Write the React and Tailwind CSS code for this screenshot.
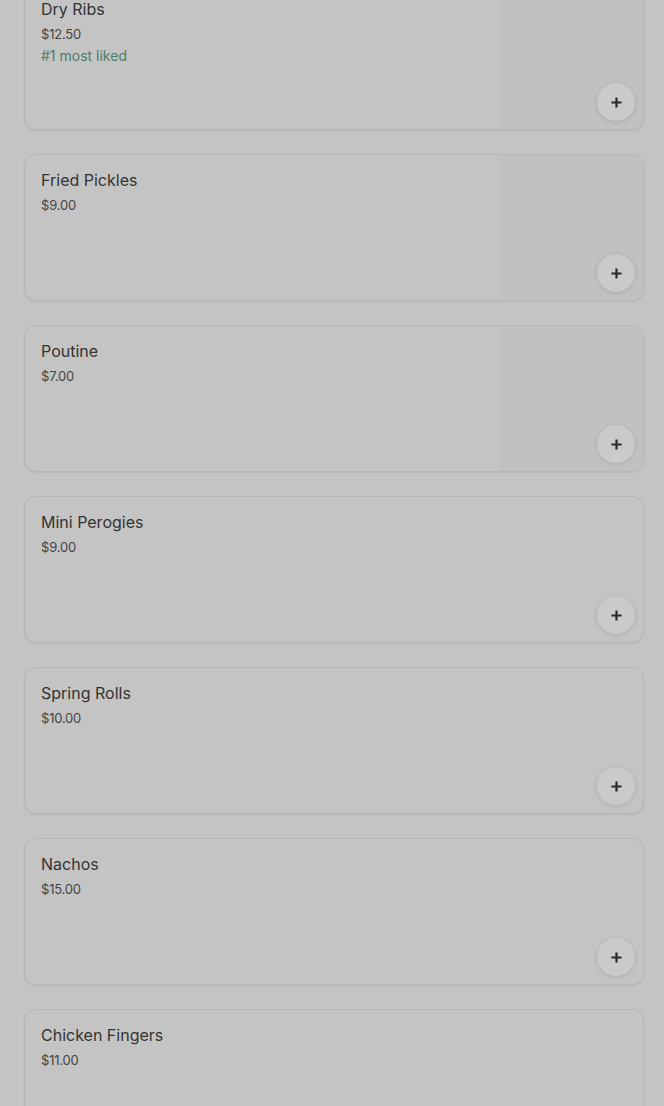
import React from "react";

const items = [
  { name: "Dry Ribs", price: "$12.50", tag: "#1 most liked", img: true },
  { name: "Fried Pickles", price: "$9.00", img: true },
  { name: "Poutine", price: "$7.00", img: true },
  { name: "Mini Perogies", price: "$9.00" },
  { name: "Spring Rolls", price: "$10.00" },
  { name: "Nachos", price: "$15.00" },
  { name: "Chicken Fingers", price: "$11.00" },
];

function Plus() {
  return (
    <svg width="13" height="13" viewBox="0 0 14 14" fill="none">
      <path d="M7 1.5v11M1.5 7h11" stroke="#2b2b2b" strokeWidth="2.4" strokeLinecap="butt" />
    </svg>
  );
}

export default function App() {
  return (
    <div
      className="min-h-[1106px] w-full overflow-hidden bg-[#c4c4c4] pl-6 pr-5"
      style={{ fontFamily: "Inter, Roboto, 'Liberation Sans', sans-serif" }}
    >
      <div className="-mt-[17px] flex flex-col gap-6">
        {items.map((it) => (
          <div
            key={it.name}
            className="relative flex h-[147px] shrink-0 overflow-hidden rounded-xl border border-[#b6b6b6] bg-[#c4c4c4] shadow-[0_1px_2px_rgba(0,0,0,0.06)]"
          >
            <div className="flex flex-1 flex-col px-4 pt-[15px]">
              <div className="text-[16px] leading-5 text-[#333333]">{it.name}</div>
              <div className="mt-[6px] text-[13px] leading-[18px] tracking-[-0.2px] text-[#444444]">{it.price}</div>
              {it.tag && (
                <div className="mt-1 text-[14px] leading-[18px] text-[#4a7f66]">{it.tag}</div>
              )}
            </div>
            {it.img && <div className="w-[143px] shrink-0 bg-[#c1c1c1]" />}
            <button className="absolute bottom-[8px] right-[8px] flex h-[38px] w-[38px] items-center justify-center rounded-full bg-[#cacaca] shadow-[0_1px_5px_rgba(0,0,0,0.12)]">
              <Plus />
            </button>
          </div>
        ))}
      </div>
    </div>
  );
}
